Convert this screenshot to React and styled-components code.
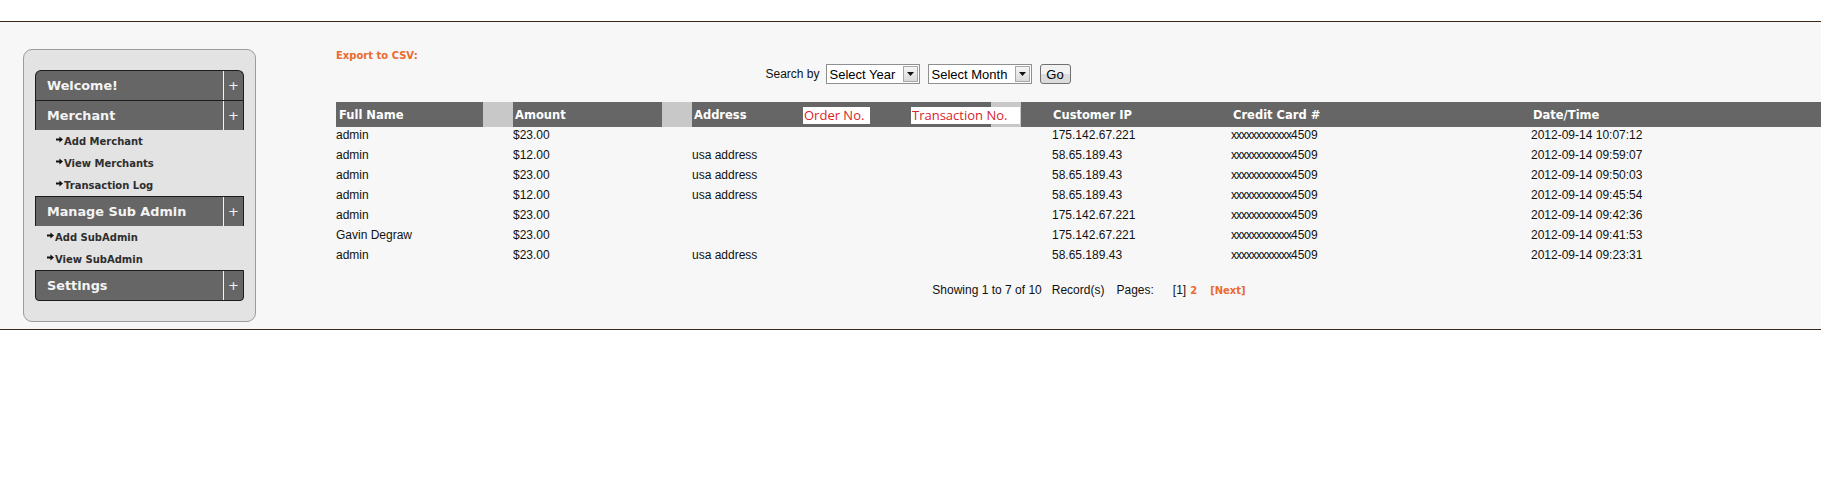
import React from "react";
import styled, { createGlobalStyle } from "styled-components";

const ORANGE = "#ea6a2f";
const DARK = "#666";
const GAP = "#c8c8c8";

const GlobalStyle = createGlobalStyle`
  html, body {
    margin: 0;
    padding: 0;
    background: #fff;
  }
  body {
    font-family: "Liberation Sans", Arial, sans-serif;
  }
`;

const menu = [
  { title: "Welcome!" },
  {
    title: "Merchant",
    indent: 21,
    items: ["Add Merchant", "View Merchants", "Transaction Log"]
  },
  { title: "Manage Sub Admin", indent: 12, items: ["Add SubAdmin", "View SubAdmin"] },
  { title: "Settings" }
];

const rows = [
  ["admin", "$23.00", "", "175.142.67.221", "2012-09-14 10:07:12"],
  ["admin", "$12.00", "usa address", "58.65.189.43", "2012-09-14 09:59:07"],
  ["admin", "$23.00", "usa address", "58.65.189.43", "2012-09-14 09:50:03"],
  ["admin", "$12.00", "usa address", "58.65.189.43", "2012-09-14 09:45:54"],
  ["admin", "$23.00", "", "175.142.67.221", "2012-09-14 09:42:36"],
  ["Gavin Degraw", "$23.00", "", "175.142.67.221", "2012-09-14 09:41:53"],
  ["admin", "$23.00", "usa address", "58.65.189.43", "2012-09-14 09:23:31"]
];

const Arrow = () => (
  <ArrowIcon width="7" height="7" viewBox="0 0 7 7">
    <path d="M0 2.6H3.4V0.4L7 3.5L3.4 6.6V4.4H0Z" fill="#111" />
  </ArrowIcon>
);

const DropArrow = () => (
  <svg width="7" height="4" viewBox="0 0 7 4">
    <path d="M0 0H7L3.5 4Z" fill="#111" />
  </svg>
);

const App = () => {
  return (
    <Page>
      <GlobalStyle />
      <Main>
        <SideWrap>
          <SideBox>
            {menu.map((m, i) => (
              <React.Fragment key={m.title}>
                <MenuHead $first={i === 0} $last={i === menu.length - 1}>
                  <MenuTitle>{m.title}</MenuTitle>
                  <PlusCell>+</PlusCell>
                </MenuHead>
                {m.items &&
                  m.items.map(it => (
                    <SubItem key={it} $indent={m.indent}>
                      <Arrow />
                      {it}
                    </SubItem>
                  ))}
              </React.Fragment>
            ))}
          </SideBox>
        </SideWrap>

        <Content>
          <ExportLink>Export to CSV:</ExportLink>
          <SearchBar>
            <SearchLabel>Search by</SearchLabel>
            <SelectWrap $w={94}>
              <select defaultValue="">
                <option value="">Select Year</option>
              </select>
              <DropBtn>
                <DropArrow />
              </DropBtn>
            </SelectWrap>
            <SelectWrap $w={104}>
              <select defaultValue="">
                <option value="">Select Month</option>
              </select>
              <DropBtn>
                <DropArrow />
              </DropBtn>
            </SelectWrap>
            <GoButton>Go</GoButton>
          </SearchBar>

          <Grid>
            <HeadCell $gap={147} $pl={3}>Full Name</HeadCell>
            <HeadCell $gap={149}>Amount</HeadCell>
            <HeadCell $gap={299}>
              <HeadText $w={109}>Address</HeadText>
              <RefLabel $w={67}>Order No.</RefLabel>
              <RefLabel $w={109} $ml={41}>
                Transaction No.
              </RefLabel>
            </HeadCell>
            <HeadCell $pl={1}>Customer IP</HeadCell>
            <HeadCell>Credit Card #</HeadCell>
            <HeadCell>Date/Time</HeadCell>

            {rows.map((r, i) => (
              <React.Fragment key={i}>
                <Cell>{r[0]}</Cell>
                <Cell>{r[1]}</Cell>
                <Cell>{r[2]}</Cell>
                <Cell>{r[3]}</Cell>
                <Cell>
                  <Masked>xxxxxxxxxxxx</Masked>4509
                </Cell>
                <Cell>{r[4]}</Cell>
              </React.Fragment>
            ))}
          </Grid>

          <Pager>
            <PageText>Showing 1 to 7 of 10</PageText>
            <PageText $ml={10}>Record(s)</PageText>
            <PageText $ml={12}>Pages:</PageText>
            <PageText $ml={19}>[1]</PageText>
            <PageLink $ml={4}>2</PageLink>
            <PageLink $ml={13}>[Next]</PageLink>
          </Pager>
        </Content>
      </Main>
    </Page>
  );
};

const Page = styled.div`
  padding-top: 21px;
`;

const Main = styled.div`
  display: flex;
  align-items: flex-start;
  height: 307px;
  background: #f7f7f7;
  border-top: 1px solid #3b2717;
  border-bottom: 1px solid #3b2717;
`;

const SideWrap = styled.aside`
  flex-shrink: 0;
  width: 233px;
  padding: 27px 0 0 23px;
`;

const SideBox = styled.div`
  border: 1px solid #9c9c9c;
  border-radius: 9px;
  background: #e3e3e3;
  padding: 20px 11px;
`;

const MenuHead = styled.div`
  display: flex;
  height: 29px;
  background: ${DARK};
  border: 1px solid #1c1c1c;
  border-bottom: ${p => (p.$last ? "1px solid #1c1c1c" : "none")};
  border-radius: ${p =>
    p.$first ? "6px 6px 0 0" : p.$last ? "0 0 4px 4px" : "0"};
  color: #f4f4f4;
  font: bold 12.8px "DejaVu Sans", Verdana, sans-serif;
`;

const MenuTitle = styled.div`
  flex: 1;
  display: flex;
  align-items: center;
  padding-left: 11px;
`;

const PlusCell = styled.div`
  width: 19px;
  border-left: 1px solid #f4f4f4;
  display: flex;
  align-items: center;
  justify-content: center;
  font: normal 13px "DejaVu Sans", Verdana, sans-serif;
`;

const SubItem = styled.div`
  display: flex;
  align-items: center;
  height: 22px;
  padding-left: ${p => p.$indent}px;
  color: #2e2e2e;
  font: bold 10px "DejaVu Sans", Verdana, sans-serif;
`;

const ArrowIcon = styled.svg`
  margin: 0 1px 3px 0;
`;

const Content = styled.main`
  flex: 1;
  min-width: 0;
  padding: 28px 0 0 80px;
`;

const ExportLink = styled.a`
  display: block;
  height: 12px;
  color: ${ORANGE};
  font: bold 10px/12px "DejaVu Sans", Verdana, sans-serif;
  cursor: pointer;
`;

const SearchBar = styled.div`
  display: flex;
  align-items: center;
  justify-content: center;
  width: 1164px;
  height: 20px;
  margin-top: 2px;
`;

const SearchLabel = styled.span`
  font-size: 12px;
  color: #111;
  margin-right: 6px;
`;

const SelectWrap = styled.label`
  box-sizing: border-box;
  display: flex;
  align-items: center;
  width: ${p => p.$w}px;
  height: 20px;
  margin-right: 8px;
  padding: 1px;
  background: #fff;
  border: 1px solid #8e8f8f;

  select {
    flex: 1;
    min-width: 0;
    appearance: none;
    border: none;
    outline: none;
    background: transparent;
    padding: 0 0 0 2px;
    font: 13px "Liberation Sans", Arial, sans-serif;
    color: #000;
  }
`;

const DropBtn = styled.span`
  box-sizing: border-box;
  display: flex;
  align-items: center;
  justify-content: center;
  width: 15px;
  height: 16px;
  border: 1px solid #a7a7a7;
  background: linear-gradient(#f6f6f6, #d9d9d9);
`;

const GoButton = styled.button`
  box-sizing: border-box;
  width: 31px;
  height: 20px;
  padding: 0;
  border: 1px solid #707070;
  border-radius: 3px;
  background: linear-gradient(#f2f2f2 50%, #dcdcdc 50%);
  font: 13px "Liberation Sans", Arial, sans-serif;
  color: #000;
`;

const Grid = styled.div`
  display: grid;
  grid-template-columns: 177px 179px 360px 179px 300px 1fr;
  grid-template-rows: 25px;
  grid-auto-rows: 20px;
  margin-top: 18px;
`;

const HeadCell = styled.div`
  display: flex;
  align-items: center;
  padding-left: ${p => (p.$pl !== undefined ? p.$pl : 2)}px;
  white-space: nowrap;
  color: #fff;
  font: bold 11.5px "DejaVu Sans", Verdana, sans-serif;
  background: ${p =>
    p.$gap
      ? `linear-gradient(to right, ${DARK} ${p.$gap}px, ${GAP} ${p.$gap}px ${
          p.$gap + 30
        }px, ${DARK} ${p.$gap + 30}px)`
      : DARK};
`;

const HeadText = styled.span`
  width: ${p => p.$w}px;
  flex-shrink: 0;
`;

const RefLabel = styled.span`
  flex-shrink: 0;
  width: ${p => p.$w}px;
  height: 17px;
  margin: 2px 0 0 ${p => p.$ml || 0}px;
  padding-left: 1px;
  box-sizing: border-box;
  background: #fff;
  color: #d9232d;
  font: normal 13px/17px "Open Sans", sans-serif;
`;

const Cell = styled.div`
  font-size: 12px;
  line-height: 16px;
  color: #111;
  white-space: nowrap;
`;

const Masked = styled.span`
  letter-spacing: -1px;
`;

const Pager = styled.div`
  display: flex;
  justify-content: center;
  align-items: baseline;
  margin-top: 15px;
  padding-left: 21px;
  line-height: 16px;
  font-size: 12px;
  color: #111;
`;

const PageText = styled.span`
  margin-left: ${p => p.$ml || 0}px;
`;

const PageLink = styled.a`
  margin-left: ${p => p.$ml || 0}px;
  color: ${ORANGE};
  font: bold 10px "DejaVu Sans", Verdana, sans-serif;
  cursor: pointer;
`;

export default App;
